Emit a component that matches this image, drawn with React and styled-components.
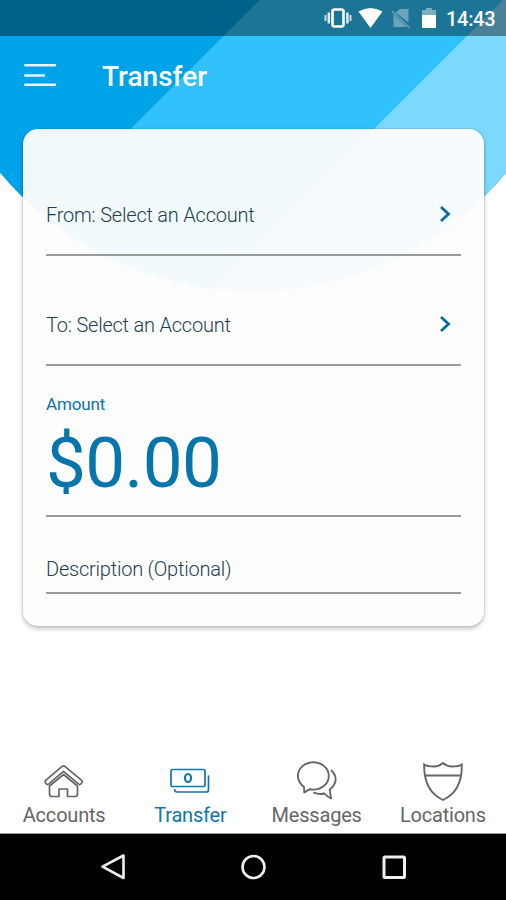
import React from "react";
import styled, { createGlobalStyle } from "styled-components";

const Global = createGlobalStyle`
  *, *::before, *::after { box-sizing: border-box; }
  body { margin: 0; background: #fff; font-family: Roboto, "Noto Sans", sans-serif; }
`;

const Screen = styled.div`
  position: relative;
  isolation: isolate;
  width: 506px;
  height: 900px;
  display: flex;
  flex-direction: column;
  overflow: hidden;
  background: #fff;
`;

const Backdrop = styled.svg`
  position: absolute;
  top: 0;
  left: 0;
  z-index: -1;
  display: block;
`;

const StatusBar = styled.div`
  height: 36px;
  flex: none;
  display: flex;
  justify-content: flex-end;
  align-items: center;
  gap: 9px;
  padding-right: 11px;
  background: rgba(0, 0, 0, 0.4);
  color: #fff;
  svg { display: block; }
`;

const Clock = styled.span`
  font-size: 20px;
  line-height: 36px;
  font-weight: 500;
  width: 49px;
  white-space: nowrap;
  padding-top: 2px;
  letter-spacing: -0.3px;
`;

const Header = styled.header`
  height: 93px;
  flex: none;
  display: flex;
  align-items: flex-start;
  gap: 45px;
  padding: 27px 24px 0;
  color: #fff;
`;

const Title = styled.h1`
  margin: 0;
  font-size: 28px;
  line-height: 28px;
  font-weight: 500;
`;

const Card = styled.main`
  flex: none;
  height: 497px;
  margin: 0 22px 0 23px;
  padding: 0 23px;
  border-radius: 15px;
  background: rgba(253, 253, 253, 0.95);
  box-shadow: 0 3px 5px rgba(0, 0, 0, 0.22), 0 0 2px rgba(0, 0, 0, 0.25);
`;

const Field = styled.div`
  display: flex;
  flex-direction: column;
  justify-content: flex-end;
  height: ${(p) => p.$height}px;
  padding-bottom: ${(p) => p.$bottom}px;
  border-bottom: 2px solid #999b9c;
`;

const FieldRow = styled.div`
  display: flex;
  justify-content: space-between;
  align-items: center;
  padding-right: 10px;
  svg { margin-bottom: 2px; }
`;

const FieldText = styled.span`
  font-size: 20px;
  line-height: 24px;
  font-weight: 300;
  color: #1d3f4f;
  white-space: nowrap;
  letter-spacing: -0.22px;
`;

const AmountLabel = styled.label`
  font-size: 17px;
  line-height: 20px;
  color: #0b73a9;
  letter-spacing: -0.15px;
`;

const AmountValue = styled.output`
  font-size: 71px;
  line-height: 84px;
  margin-top: 7px;
  color: #0575ab;
  letter-spacing: -0.6px;
`;

const Spacer = styled.div`
  flex: 1;
`;

const Tabs = styled.nav`
  height: 77px;
  flex: none;
  display: grid;
  grid-template-columns: repeat(4, 1fr);
  padding-left: 1px;
  border-bottom: 1px solid #999;
`;

const Tab = styled.div`
  display: flex;
  flex-direction: column;
  align-items: center;
  color: ${(p) => (p.$active ? "#0f78a6" : "#666")};
  svg { display: block; }
`;

const TabLabel = styled.span`
  font-size: 20px;
  line-height: 24px;
  margin-top: 2px;
  letter-spacing: -0.2px;
`;

const SystemBar = styled.footer`
  height: 66px;
  flex: none;
  display: flex;
  justify-content: center;
  gap: 112px;
  padding: 19px 0 0 1px;
  background: #000;
  svg { display: block; }
`;

const icon = {
  fill: "none",
  stroke: "currentColor",
  strokeWidth: 1.7,
  strokeLinejoin: "round",
  strokeLinecap: "round",
};

const Chevron = () => (
  <svg width="12" height="18" viewBox="0 0 12 18" fill="none" stroke="#076ca3" strokeWidth="2.8">
    <path d="M2 2l7.500 7-7.500 7" />
  </svg>
);

const StatusIcons = () => (
  <svg width="113" height="24" viewBox="0 0 113 24">
    <rect x="8.500" y="3.500" width="11" height="17" rx="2" fill="none" stroke="#fff" strokeWidth="2.600" />
    <path d="M4.800 6.500v11M23.400 6.500v11" stroke="#fff" strokeWidth="2.500" opacity=".85" />
    <path d="M1.500 9v6M26.500 9v6" stroke="#fff" strokeWidth="2" opacity=".75" />
    <path d="M34.500 5.500Q46.500-1.500 58.500 5.500L46.500 22z" fill="#fff" />
    <g opacity=".35">
      <path d="M71.500 6.500L76 3H84.500V16.500z" fill="#fff" />
      <path d="M69.500 8L82.500 21H69.500z" fill="#fff" />
      <path d="M68 5L85.500 22" stroke="#fff" strokeWidth="1.500" />
    </g>
    <path d="M98 10V5q0-1 1-1h3V2h6v2h3q1 0 1 1v5z" fill="#fff" opacity=".42" />
    <path d="M98 9h14v12q0 1-1 1H99q-1 0-1-1z" fill="#fff" />
  </svg>
);

const HomeIcon = () => (
  <svg width="42" height="44" viewBox="0 0 42 44" {...icon}>
    <path d="M19.200 9.300q1.300-.9 2.600 0L39 23.700q.7 1-.2 2l-1.200 1.500q-.9.800-1.900 0L20.500 14.300 5.600 27.200q-1 .8-1.900 0L2.500 25.700q-.9-1-.2-2z" />
    <path d="M6.500 29V37Q6.500 39.500 9 39.500h7v-7.500h8.500v7.500h7.500q2.500 0 2.500-2.500v-8L20.500 17.500z" />
  </svg>
);

const MoneyIcon = () => (
  <svg width="42" height="44" viewBox="0 0 42 44" {...icon}>
    <rect x="2" y="12.500" width="34" height="17" rx="1.500" />
    <path d="M39.500 19V33q0 2-2 2H8q-2.300 0-2.300-2.300" />
    <ellipse cx="19" cy="21" rx="3" ry="4" strokeWidth="2.200" />
  </svg>
);

const ChatIcon = () => (
  <svg width="42" height="44" viewBox="0 0 42 44" {...icon} strokeWidth="1.900">
    <path d="M8.300 35.500L8 30Q1.900 25 1.900 18.900C1.900 11 9 5.300 17.300 5.300S32.800 11 32.800 18.900 25.500 32.600 17.300 32.600q-1.500 0-3.300-.4Q11.500 33.500 8.300 35.500z" />
    <path d="M35.500 13.500C41.500 19.500 41 27 33.700 32.500L35 41.500Q31 39.500 28.500 36.500Q23 37.800 18 35.700" />
  </svg>
);

const ShieldIcon = () => (
  <svg width="42" height="44" viewBox="0 0 42 44" {...icon} strokeWidth="1.900">
    <path d="M2.200 7.500Q5 9.500 12 9.500Q17 9.500 21 6Q25 9.500 30 9.500Q37 9.500 39.800 7.500Q40.500 34 21 43Q1.500 34 2.200 7.500zM3.500 18.500h35" strokeLinejoin="miter" />
  </svg>
);

const tabs = [
  { label: "Accounts", Icon: HomeIcon },
  { label: "Transfer", Icon: MoneyIcon, active: true },
  { label: "Messages", Icon: ChatIcon },
  { label: "Locations", Icon: ShieldIcon },
];

export default function App() {
  return (
    <Screen>
      <Global />
      <Backdrop width="506" height="300" viewBox="0 0 506 300">
        <clipPath id="arc">
          <circle cx="253" cy="-39" r="330" />
        </clipPath>
        <g clipPath="url(#arc)">
          <rect width="506" height="300" fill="#00a3e8" />
          <path d="M259.500 0H506V300H-40.500z" fill="#30c1fb" />
          <path d="M503 0H506V300H203z" fill="#7dd8fd" />
        </g>
      </Backdrop>
      <StatusBar>
        <StatusIcons />
        <Clock>14:43</Clock>
      </StatusBar>
      <Header>
        <svg width="33" height="28" viewBox="0 0 33 28" stroke="#fff" strokeWidth="2.500" strokeLinecap="round">
          <path d="M1.300 2.300h29.700M1.300 12.400h18.500M1.300 21.800h29.700" opacity=".9" />
        </svg>
        <Title>Transfer</Title>
      </Header>
      <Card>
        <Field $height={127} $bottom={27}>
          <FieldRow>
            <FieldText>From: Select an Account</FieldText>
            <Chevron />
          </FieldRow>
        </Field>
        <Field $height={110} $bottom={27}>
          <FieldRow>
            <FieldText>To: Select an Account</FieldText>
            <Chevron />
          </FieldRow>
        </Field>
        <Field $height={151} $bottom={10}>
          <AmountLabel>Amount</AmountLabel>
          <AmountValue>$0.00</AmountValue>
        </Field>
        <Field $height={77} $bottom={11}>
          <FieldText>Description (Optional)</FieldText>
        </Field>
      </Card>
      <Spacer />
      <Tabs>
        {tabs.map(({ label, Icon, active }) => (
          <Tab key={label} $active={active}>
            <Icon />
            <TabLabel>{label}</TabLabel>
          </Tab>
        ))}
      </Tabs>
      <SystemBar>
        <svg width="28" height="28" viewBox="0 0 28 28" fill="none" stroke="#eee" strokeWidth="2.600" strokeLinejoin="round">
          <path d="M23.500 2.500V25L2.500 13.700z" />
        </svg>
        <svg width="28" height="28" viewBox="0 0 28 28" fill="none" stroke="#eee" strokeWidth="2.600">
          <circle cx="13.500" cy="14" r="11" />
        </svg>
        <svg width="28" height="28" viewBox="0 0 28 28" fill="none" stroke="#eee" strokeWidth="3">
          <rect x="4" y="4" width="20.500" height="20.500" rx="1" />
        </svg>
      </SystemBar>
    </Screen>
  );
}
